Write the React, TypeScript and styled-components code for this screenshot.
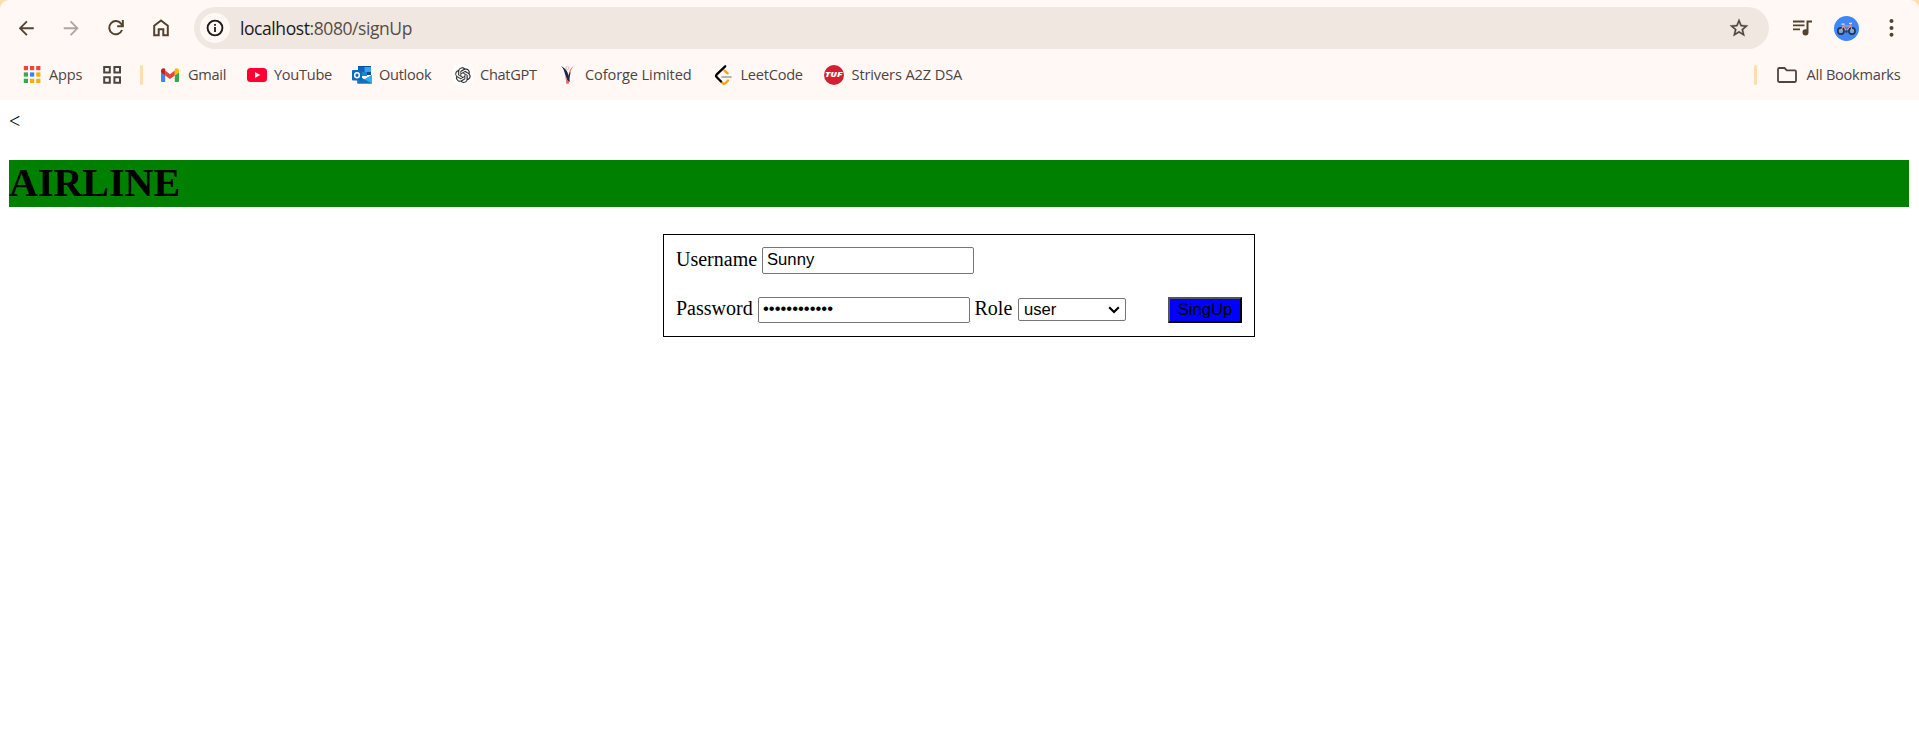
import React from 'react';
import styled, { createGlobalStyle } from 'styled-components';

const GlobalStyle = createGlobalStyle`
  * { box-sizing: border-box; }
  html, body { margin: 0; padding: 0; background: #fff; }
  body { overflow: hidden; }
  svg { display: block; flex: none; overflow: visible; }
`;

const Window = styled.div`
  width: 1919px;
  height: 747px;
  overflow: hidden;
  background: #fff;
`;

const Frame = styled.header`
  height: 100px;
  background: #ffddb0;
`;

const Chrome = styled.div`
  height: 100px;
  background: #fff8f5;
  border-radius: 9px 9px 0 0;
  font-family: 'Open Sans', 'Noto Sans', sans-serif;
`;

const Toolbar = styled.nav`
  display: flex;
  align-items: center;
  height: 56px;
  padding-left: 4px;
`;

const NavButton = styled.span<{ $faded?: boolean }>`
  display: flex;
  align-items: center;
  justify-content: center;
  width: 45px;
  height: 42px;
  color: ${p => (p.$faded ? '#ada7a3' : '#54432b')};
`;

const AddressBar = styled.div`
  display: flex;
  align-items: center;
  width: 1575px;
  height: 42px;
  margin-left: 10px;
  padding: 0 19px 0 6px;
  border-radius: 21px;
  background: #f0e7e1;
  color: #4d453f;
`;

const SiteInfo = styled.span`
  display: flex;
  align-items: center;
  justify-content: center;
  width: 30px;
  height: 30px;
  border-radius: 50%;
  background: #fff8f5;
  color: #201a17;
`;

const Url = styled.span`
  flex: 1;
  padding-left: 10px;
  font-size: 17.5px;
  line-height: 24px;
  letter-spacing: -0.42px;
  color: #554d47;
  b { font-weight: 400; color: #201a17; }
`;

const ToolbarIcons = styled.div`
  display: flex;
  align-items: center;
  gap: 22px;
  padding-left: 24px;
  color: #54432b;
`;

const MenuSlot = styled.span`
  padding-left: 8px;
`;

const BookmarkBar = styled.nav`
  display: flex;
  align-items: center;
  height: 38px;
  padding-left: 22px;
  color: #4d453f;
`;

const Bookmark = styled.span<{ $w: number; $gap?: number }>`
  display: flex;
  align-items: center;
  gap: ${p => p.$gap ?? 7}px;
  width: ${p => p.$w}px;
  flex: none;
`;

const Label = styled.span<{ $ls?: number }>`
  padding-bottom: 2px;
  font-size: 14.6px;
  line-height: 20px;
  letter-spacing: ${p => p.$ls ?? -0.3}px;
  white-space: nowrap;
`;

const Divider = styled.i`
  width: 3px;
  height: 20px;
  border-radius: 2px;
  background: #ffddb0;
`;

const Spacer = styled.span`
  flex: 1;
`;

const Page = styled.main`
  padding: 10px 10px 0 9px;
  font: 20px 'Liberation Serif', 'Times New Roman', serif;
  color: #000;
`;

const Stray = styled.div`
  height: 23px;
  line-height: 23px;
`;

const Banner = styled.h1`
  height: 47px;
  margin: 27px 0;
  background: #008000;
  font-size: 40px;
  line-height: 46px;
  font-weight: 700;
`;

const Form = styled.form`
  display: flex;
  flex-direction: column;
  gap: 23px;
  width: 592px;
  height: 103px;
  margin: 0 0 0 654px;
  padding: 12px;
  border: 1px solid #000;
`;

const Row = styled.div`
  display: flex;
  align-items: center;
  height: 27px;
  &:last-child { height: 26px; }
`;

const FieldName = styled.label<{ $w: number; $indent?: number }>`
  width: ${p => p.$w}px;
  flex: none;
  padding: 0 0 3px ${p => p.$indent ?? 0}px;
  line-height: 23px;
  white-space: nowrap;
`;

const controlFont = `font: 16.667px 'Liberation Sans', Arial, sans-serif;`;

const TextField = styled.input`
  ${controlFont}
  width: 212px;
  height: 100%;
  margin: 0;
  padding: 0 4px 2px;
  border: 1px solid #767676;
  border-radius: 2px;
  background: #fff;
  color: #000;
  outline: none;
`;

const SelectBox = styled.span`
  ${controlFont}
  display: flex;
  align-items: center;
  justify-content: space-between;
  width: 108px;
  height: 23px;
  margin-bottom: 1px;
  padding: 0 5px;
  border: 1px solid #767676;
  border-radius: 2px;
`;

const Submit = styled.button`
  ${controlFont}
  width: 74px;
  height: 26px;
  margin: 0 0 0 42px;
  padding: 0 0 1px;
  border: 2px outset #000;
  border-radius: 0;
  background: #0000ff;
  color: #000;
`;

const BackIcon = () => (
  <svg width="22.5" height="22.5" viewBox="0 0 24 24" fill="currentColor">
    <path d="M20 11H7.83l5.59-5.59L12 4l-8 8 8 8 1.41-1.41L7.83 13H20v-2z" />
  </svg>
);
const ForwardIcon = () => (
  <svg width="22.5" height="22.5" viewBox="0 0 24 24" fill="currentColor">
    <path d="M4 11h12.17l-5.59-5.59L12 4l8 8-8 8-1.41-1.41L16.17 13H4v-2z" />
  </svg>
);
const ReloadIcon = () => (
  <svg width="17" height="16" viewBox="0 0 17 16" fill="none" stroke="currentColor" strokeWidth="2">
    <path d="M14 10A6.6 6.6 0 1 1 13.3 4L15 6" />
    <path d="M14.8 0V6.200H9.200" />
  </svg>
);
const HomeIcon = () => (
  <svg width="17" height="18" viewBox="0 0 17 18" fill="none" stroke="currentColor" strokeWidth="2">
    <path d="M1.200 6.700 8 1.500l6.800 5.200V16.300H10.300V10.300H5.700v6H1.200z" />
  </svg>
);
const InfoIcon = () => (
  <svg width="18" height="18" viewBox="0 0 18 18">
    <circle cx="9" cy="9" r="7.400" fill="none" stroke="currentColor" strokeWidth="1.900" />
    <path d="M8.100 8h1.800v5H8.100zM8.100 4.900h1.800v1.800H8.100z" fill="currentColor" />
  </svg>
);
const StarIcon = () => (
  <svg width="22" height="22" viewBox="0 0 24 24" fill="currentColor" stroke="currentColor" strokeWidth=".3">
    <path d="m22 9.24-7.19-.62L12 2 9.19 8.63 2 9.24l5.46 4.73L5.82 21 12 17.27 18.18 21l-1.63-7.03L22 9.24zM12 15.4l-3.76 2.27 1-4.28-3.32-2.88 4.38-.38L12 6.1l1.71 4.04 4.38.38-3.32 2.88 1 4.28L12 15.4z" />
  </svg>
);
const MediaIcon = () => (
  <svg width="19" height="15" viewBox="3 6.500 19 14" preserveAspectRatio="none" fill="currentColor">
    <path d="M14.500 6H3v1.800h11.500V6zm0 3.700H3v1.800h11.500V9.700zM3 15.200h7v-1.800H3v1.800zM16.500 6v8.300c-.3-.1-.6-.2-1-.2a3 3 0 1 0 3 3V8H22V6h-5.500z" />
  </svg>
);
const Avatar = () => (
  <svg width="25" height="25" viewBox="0 0 25 25">
    <circle cx="12.500" cy="12.500" r="12.500" fill="#3f87f8" />
    <g fill="#75a4e6" stroke="#25334a" strokeWidth="1.600">
      <circle cx="6.900" cy="15" r="3.100" />
      <circle cx="18" cy="15" r="3.100" />
    </g>
    <path d="M7 15 9 10l3.500 5L16.500 10H9M16.500 8l1.500 7" fill="none" stroke="#e8a08e" strokeWidth="1" />
    <path d="M7.500 8.200h3.200M15 7.300h3" stroke="#eadfdd" strokeWidth="1.300" />
    <circle cx="12.500" cy="15.500" r="1.300" fill="#3b3b48" />
  </svg>
);
const MenuIcon = () => (
  <svg width="5" height="20" viewBox="0 0 5 20" fill="currentColor">
    <circle cx="2.500" cy="3" r="2" />
    <circle cx="2.500" cy="10" r="2" />
    <circle cx="2.500" cy="16.800" r="2" />
  </svg>
);

const appColors = ['#f04438', '#f04438', '#f04438', '#34a853', '#2f86f6', '#fbae0a', '#34a853', '#fbae0a', '#fbae0a'];
const AppsIcon = () => (
  <svg width="20" height="20" viewBox="0 0 20 20">
    {appColors.map((c, i) => (
      <rect key={i} x={1.8 + (i % 3) * 6.2} y={1 + Math.floor(i / 3) * 6.4} width="4.200" height="4.200" fill={c} />
    ))}
  </svg>
);
const TilesIcon = () => (
  <svg width="20" height="20" viewBox="0 0 20 20" fill="none" stroke="currentColor" strokeWidth="2">
    <path d="M2.200 2h5.600v5.600H2.200zM12.400 2H18v5.600h-5.600zM2.200 12.200h5.600v5.600H2.200zM12.400 12.200H18v5.600h-5.600z" />
  </svg>
);
const GmailIcon = () => (
  <svg width="20" height="20" viewBox="0 0 20 20">
    <path d="M1 7.200 5.200 10.300V17H2.300C1.500 17 1 16.500 1 15.700z" fill="#4285f4" />
    <path d="M19 7.200 14.800 10.300V17h2.900c.8 0 1.300-.5 1.300-1.300z" fill="#34a853" />
    <path d="M5.200 5.600 10 9.200l4.800-3.600v4.900L10 14.100 5.200 10.500z" fill="#ea4335" />
    <path d="M1 5.600c0-2 2.300-3.100 3.800-1.900l.4.300v6.500L1 7.400z" fill="#c5221f" />
    <path d="M19 5.600c0-2-2.300-3.100-3.800-1.900l-.4.300v6.500L19 7.400z" fill="#fbbc04" />
  </svg>
);
const YouTubeIcon = () => (
  <svg width="20" height="20" viewBox="0 0 20 20">
    <rect y="3" width="20" height="14" rx="3.500" fill="#ff0033" />
    <path d="m8 7 5.200 3L8 13z" fill="#fff" />
  </svg>
);
const OutlookIcon = () => (
  <svg width="20" height="20" viewBox="0 0 20 20">
    <path d="M6 1h13v9H6z" fill="#0a4f93" />
    <path d="M6 2h6.500v5H6z" fill="#0a66bd" />
    <path d="M12.500 2H19v5h-6.500z" fill="#32a8ea" />
    <path d="M10 7h5v4h-5z" fill="#1686d4" />
    <path d="M5 10l7.500 4.500L20 10v8.500H5z" fill="#1c91dd" />
    <path d="M12 14.500 20 10v8.500z" fill="#31aef0" />
    <path d="m8 12 12 6.500H6z" fill="#1470bb" />
    <rect y="5" width="10" height="10.500" rx="1" fill="#0b6cbd" />
    <ellipse cx="5" cy="10.200" rx="2.300" ry="2.500" fill="none" stroke="#fff" strokeWidth="1.500" />
  </svg>
);
const ChatGptIcon = () => (
  <svg width="20" height="20" viewBox="0 0 20 20">
    <rect width="20" height="20" rx="5" fill="#fff" />
    <g transform="translate(2.100 2.300) scale(.65)" fill="#29292b" stroke="#29292b" strokeWidth=".2">
      <path d="M22.282 9.821a5.985 5.985 0 0 0-.516-4.911 6.046 6.046 0 0 0-6.510-2.900A6.065 6.065 0 0 0 4.981 4.182a5.985 5.985 0 0 0-3.998 2.900 6.046 6.046 0 0 0 .743 7.097 5.980 5.980 0 0 0 .511 4.911 6.051 6.051 0 0 0 6.515 2.900A5.985 5.985 0 0 0 13.260 24a6.056 6.056 0 0 0 5.772-4.206 5.990 5.990 0 0 0 3.998-2.900 6.056 6.056 0 0 0-.748-7.073zm-9.022 12.608a4.476 4.476 0 0 1-2.876-1.041l.142-.080 4.778-2.758a.795.795 0 0 0 .393-.682v-6.737l2.020 1.169a.071.071 0 0 1 .038.052v5.583a4.504 4.504 0 0 1-4.495 4.494zM3.600 18.304a4.471 4.471 0 0 1-.535-3.014l.142.085 4.783 2.759a.771.771 0 0 0 .781 0l5.843-3.369v2.332a.080.080 0 0 1-.033.062L9.740 19.950a4.499 4.499 0 0 1-6.140-1.646zM2.341 7.896a4.485 4.485 0 0 1 2.366-1.973V11.600a.766.766 0 0 0 .388.677l5.815 3.354-2.020 1.169a.076.076 0 0 1-.071 0l-4.830-2.787A4.504 4.504 0 0 1 2.341 7.872zm16.597 3.855-5.833-3.387 2.014-1.164a.076.076 0 0 1 .071 0l4.830 2.791a4.494 4.494 0 0 1-.676 8.105v-5.678a.790.790 0 0 0-.406-.667zm2.010-3.023-.142-.085-4.774-2.782a.776.776 0 0 0-.785 0L9.409 9.230V6.897a.066.066 0 0 1 .028-.061l4.830-2.787a4.499 4.499 0 0 1 6.680 4.660zM8.307 12.863l-2.020-1.164a.080.080 0 0 1-.038-.057V6.074a4.499 4.499 0 0 1 7.376-3.454l-.142.081-4.778 2.758a.795.795 0 0 0-.393.682zm1.098-2.365 2.602-1.500 2.607 1.500v2.999l-2.597 1.500-2.607-1.500z" />
    </g>
  </svg>
);
const CoforgeIcon = () => (
  <svg width="20" height="20" viewBox="0 0 20 20">
    <path d="M16.800 1c-2.600 1.500-4 3.500-4.500 6L9 18.500h3c0-4.500.5-8.500 1.500-11.500.6-2.300 1.800-4.500 3.300-6z" fill="#f26d58" />
    <path d="M4 1c3.500 1.700 5.600 4 6.600 6.500l2.400 9.500-2.200-1.500C7.500 10.500 8 4.500 4 1z" fill="#14294b" />
    <path d="M8 9.500 9.500 18.500h2z" fill="#f26d58" />
    <path d="M12.600 7.500 11 12l1 4 1.500-8.500z" fill="#14294b" />
    <circle cx="10.500" cy="3" r="1.500" fill="none" stroke="#f5a496" strokeWidth=".7" />
  </svg>
);
const LeetCodeIcon = () => (
  <svg width="20" height="20" viewBox="0 0 20 20" fill="none" strokeLinecap="round" strokeWidth="2.300">
    <path d="m10.500 5.600 3.200 2.700M14 15.500l-2 2.200c-1 1.100-2.700 1.100-3.700.2l-1.400-1.400" stroke="#ffa116" />
    <path d="M8 12h9" stroke="#b9b5b3" strokeWidth="1.800" />
    <path d="M11.200 1.300 2.800 9.300c-.9.900-.9 2 0 2.900L7 16.500" stroke="#000" />
  </svg>
);
const TufText = styled.text`
  font: italic 800 6.500px 'Open Sans', sans-serif;
`;
const TufIcon = () => (
  <svg width="20" height="20" viewBox="0 0 20 20">
    <circle cx="10" cy="10" r="10" fill="#d41f30" />
    <TufText x="1" y="12.300" textLength="17.500" lengthAdjust="spacingAndGlyphs" fill="#fff">TUF</TufText>
  </svg>
);
const FolderIcon = () => (
  <svg width="20" height="16" viewBox="0 0 20 16" fill="none" stroke="currentColor" strokeWidth="1.800">
    <path d="M2.200 1h5.300l2.300 2.300h8q1.200 0 1.200 1.200v9.300q0 1.200-1.200 1.200H2.200Q1 15 1 13.800V2.200Q1 1 2.200 1z" />
  </svg>
);
const Chevron = () => (
  <svg width="11" height="8" viewBox="0 0 11 8" fill="none" stroke="#000" strokeWidth="2.100">
    <path d="m.2 1.200 4.800 4.800 4.800-4.800" />
  </svg>
);

const bookmarks = [
  { name: 'Gmail', Icon: GmailIcon, w: 87, gap: 8, ls: -0.3 },
  { name: 'YouTube', Icon: YouTubeIcon, w: 105, gap: 7, ls: -0.3 },
  { name: 'Outlook', Icon: OutlookIcon, w: 101, gap: 7, ls: -0.3 },
  { name: 'ChatGPT', Icon: ChatGptIcon, w: 104, gap: 7, ls: -0.3 },
  { name: 'Coforge Limited', Icon: CoforgeIcon, w: 157, gap: 8, ls: -0.12 },
  { name: 'LeetCode', Icon: LeetCodeIcon, w: 110, gap: 6.5, ls: -0.25 },
  { name: 'Strivers A2Z DSA', Icon: TufIcon, w: 150, gap: 7.5, ls: -0.12 },
];

export default function App() {
  return (
    <Window>
      <GlobalStyle />
      <Frame>
        <Chrome>
          <Toolbar>
            <NavButton><BackIcon /></NavButton>
            <NavButton $faded><ForwardIcon /></NavButton>
            <NavButton><ReloadIcon /></NavButton>
            <NavButton><HomeIcon /></NavButton>
            <AddressBar>
              <SiteInfo><InfoIcon /></SiteInfo>
              <Url><b>localhost</b>:8080/signUp</Url>
              <StarIcon />
            </AddressBar>
            <ToolbarIcons>
              <MediaIcon />
              <Avatar />
              <MenuSlot><MenuIcon /></MenuSlot>
            </ToolbarIcons>
          </Toolbar>
          <BookmarkBar>
            <Bookmark $w={80}><AppsIcon /><Label $ls={-0.2}>Apps</Label></Bookmark>
            <Bookmark $w={38}><TilesIcon /></Bookmark>
            <Bookmark $w={20}><Divider /></Bookmark>
            {bookmarks.map(({ name, Icon, w, gap, ls }) => (
              <Bookmark key={name} $w={w} $gap={gap}><Icon /><Label $ls={ls}>{name}</Label></Bookmark>
            ))}
            <Spacer />
            <Bookmark $w={23}><Divider /></Bookmark>
            <Bookmark $w={142} $gap={9.5}><FolderIcon /><Label $ls={-0.25}>All Bookmarks</Label></Bookmark>
          </BookmarkBar>
        </Chrome>
      </Frame>
      <Page>
        <Stray>&lt;</Stray>
        <Banner>AIRLINE</Banner>
        <Form onSubmit={e => e.preventDefault()}>
          <Row>
            <FieldName $w={86}>Username</FieldName>
            <TextField type="text" defaultValue="Sunny" />
          </Row>
          <Row>
            <FieldName $w={82}>Password</FieldName>
            <TextField type="password" defaultValue="abcdefghijkl" />
            <FieldName $w={48} $indent={4.5}>Role</FieldName>
            <SelectBox>user<Chevron /></SelectBox>
            <Submit type="submit">SingUp</Submit>
          </Row>
        </Form>
      </Page>
    </Window>
  );
}
